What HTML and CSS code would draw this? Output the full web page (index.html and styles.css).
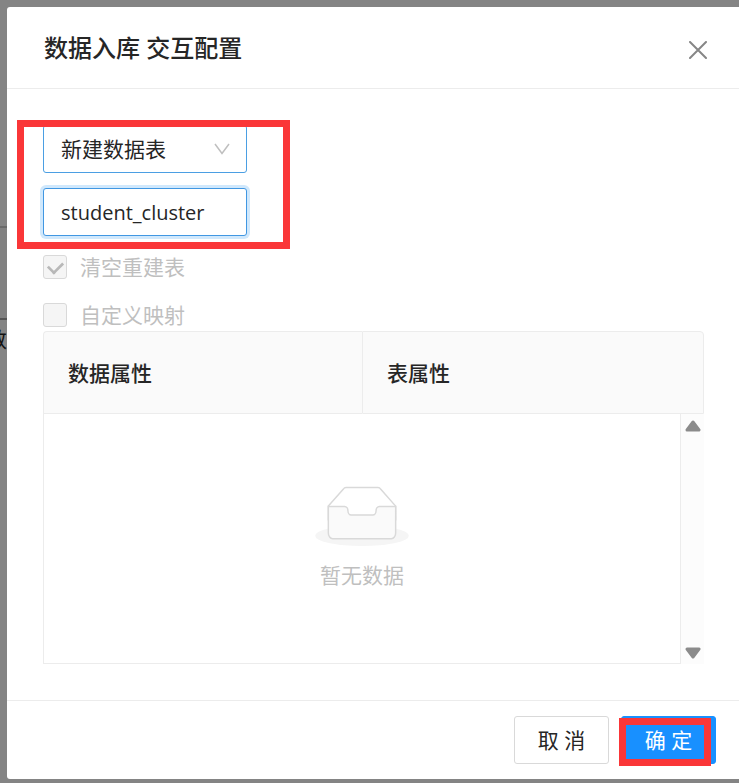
FILE: index.html
```html
<!DOCTYPE html>
<html lang="zh-CN">
<head>
<meta charset="utf-8">
<title>数据入库 交互配置</title>
<link rel="stylesheet" href="styles.css">
</head>
<body>
<div class="backdrop" aria-hidden="true">
  <div class="backdrop-panel"></div>
  <span class="backdrop-label">数</span>
</div>
<div class="modal" role="dialog" aria-labelledby="modal-title">
  <header class="modal-header">
    <h1 id="modal-title" class="modal-title">数据入库 交互配置</h1>
    <button class="close" type="button" aria-label="关闭">
      <svg width="18" height="18" viewBox="0 0 18 18"><path d="M1 1L17 17M17 1L1 17" fill="none" stroke="#868686" stroke-width="2" stroke-linecap="round"/></svg>
    </button>
  </header>
  <main class="modal-body">
    <div class="fields">
      <div class="select-wrap">
        <select class="control" aria-label="数据表"><option>新建数据表</option></select>
        <svg class="chevron" width="16" height="12" viewBox="0 0 16 12"><path d="M1 1L8 10.500L15 1" fill="none" stroke="#bfbfbf" stroke-width="1.500"/></svg>
      </div>
      <input class="control focused" type="text" value="student_cluster" aria-label="表名">
      <div class="mark mark-fields"></div>
    </div>
    <label class="check"><input type="checkbox" checked disabled><span>清空重建表</span></label>
    <label class="check"><input type="checkbox" disabled><span>自定义映射</span></label>
    <table class="table">
      <colgroup><col><col><col class="col-scroll"></colgroup>
      <thead>
        <tr><th>数据属性</th><th colspan="2">表属性</th></tr>
      </thead>
      <tbody>
        <tr>
          <td class="empty" colspan="2">
            <svg class="empty-icon" width="94" height="60" viewBox="0 0 64 41">
              <g transform="translate(0 1)" fill="none" fill-rule="evenodd">
                <ellipse fill="#f5f5f5" cx="32" cy="33" rx="32" ry="7"/>
                <g fill-rule="nonzero" stroke="#d9d9d9">
                  <path d="M55 12.760L44.854 1.258C44.367.474 43.656 0 42.907 0H21.093c-.749 0-1.460.474-1.947 1.257L9 12.761V22h46v-9.240z"/>
                  <path d="M41.613 15.931c0-1.605.994-2.930 2.227-2.931H55v18.137C55 33.260 53.680 35 52.050 35h-40.100C10.320 35 9 33.259 9 31.137V13h11.160c1.233 0 2.227 1.323 2.227 2.928v.022c0 1.605 1.005 2.901 2.237 2.901h14.752c1.232 0 2.237-1.308 2.237-2.913v-.007z" fill="#fafafa"/>
                </g>
              </g>
            </svg>
            <p class="empty-text">暂无数据</p>
          </td>
          <td class="scroll">
            <div class="scroll-track">
              <svg width="16" height="12" viewBox="0 0 16 12"><path d="M8 2L14 10H2Z" fill="#8b8b8b" stroke="#8b8b8b" stroke-width="3" stroke-linejoin="round"/></svg>
              <svg width="16" height="12" viewBox="0 0 16 12"><path d="M8 10L14 2H2Z" fill="#8b8b8b" stroke="#8b8b8b" stroke-width="3" stroke-linejoin="round"/></svg>
            </div>
          </td>
        </tr>
      </tbody>
    </table>
  </main>
  <footer class="modal-footer">
    <button class="btn" type="button">取 消</button>
    <div class="confirm">
      <button class="btn primary" type="button">确 定</button>
      <div class="mark mark-confirm"></div>
    </div>
  </footer>
</div>
</body>
</html>
```
FILE: styles.css
```css
* {
  box-sizing: border-box;
}

body {
  margin: 0;
  padding: 7px 0 4px 7px;
  background: #848484;
  color: #262626;
  font-family: "Noto Sans", "Noto Sans CJK SC", sans-serif;
  font-size: 21px;
  line-height: 32px;
}

.backdrop {
  position: absolute;
  top: 226px;
  left: 0;
  width: 7px;
  overflow: hidden;
}

.backdrop-panel {
  height: 94px;
  border-top: 2px solid #6a6a6a;
  border-bottom: 2px solid #555;
  background: #818181;
}

.backdrop-label {
  display: block;
  width: 21px;
  margin-left: -14px;
  padding-top: 3px;
  color: #111;
}

.modal {
  position: relative;
  background: #fff;
  border-radius: 3px 0 0 3px;
}

.modal-header {
  display: flex;
  align-items: center;
  justify-content: space-between;
  height: 82px;
  padding: 0 32px 0 37px;
  border-bottom: 1px solid #ececec;
}

.modal-title {
  margin: 0;
  font-size: 24px;
  font-weight: 500;
}

.close {
  display: flex;
  margin: 4px 0 0;
  padding: 0;
  border: 0;
  background: none;
}

.modal-body {
  padding: 36px 35px 36px 36px;
}

.fields {
  position: relative;
  display: flex;
  flex-direction: column;
  gap: 15px;
  width: 204px;
  margin-bottom: 17px;
}

.select-wrap {
  position: relative;
}

.control {
  display: block;
  width: 100%;
  height: 48px;
  padding: 0 17px;
  border: 1px solid #4b9fe3;
  border-radius: 3px;
  outline: 0;
  background: #fff;
  color: #262626;
  font: inherit;
  appearance: none;
}

.focused {
  border-color: #4197e2;
  box-shadow: 0 0 0 3px #d0e8fc;
}

input.control {
  font-family: "Open Sans", sans-serif;
  font-size: 20px;
}

.chevron {
  position: absolute;
  top: 18px;
  right: 17px;
  pointer-events: none;
}

.mark {
  position: absolute;
  border: 7px solid #fa3638;
  pointer-events: none;
}

.mark-fields {
  inset: -5px -43px -13px -26px;
}

.check {
  display: flex;
  align-items: center;
  gap: 13px;
  height: 28px;
  margin-bottom: 20px;
  color: #bfbfbf;
}

.check + .check {
  margin-bottom: 2px;
}

.check input {
  display: grid;
  place-items: center;
  width: 24px;
  height: 24px;
  margin: 0;
  border: 1px solid #d9d9d9;
  border-radius: 3px;
  background: #f5f5f5;
  appearance: none;
}

.check input:checked::after {
  content: "";
  width: 8px;
  height: 13px;
  margin-bottom: 3px;
  border: solid #b8b8b8;
  border-width: 0 3px 3px 0;
  transform: rotate(45deg) scale(0.9);
}

.table {
  width: 100%;
  border-spacing: 0;
  table-layout: fixed;
}

.col-scroll {
  width: 23px;
}

.table th {
  height: 83px;
  padding: 0 25px 0 24px;
  border: 1px solid #ececec;
  background: #fafafa;
  font-weight: 500;
  text-align: left;
}

.table th:first-child {
  border-right: 0;
  border-top-left-radius: 4px;
}

.table th:last-child {
  border-top-right-radius: 4px;
}

.table td {
  height: 250px;
  padding: 0;
}

.table .empty {
  border: solid #ececec;
  border-width: 0 1px 1px;
  color: #bfbfbf;
  text-align: center;
}

.empty-icon {
  display: block;
  margin: 0 auto 13px;
}

.empty-text {
  margin: 0;
}

.scroll-track {
  display: flex;
  flex-direction: column;
  align-items: center;
  justify-content: space-between;
  height: 250px;
  padding: 6px 0 5px;
  background: #fcfcfc;
}

.modal-footer {
  display: flex;
  justify-content: flex-end;
  gap: 12px;
  padding: 15px 23px 15px 0;
  border-top: 1px solid #ececec;
}

.btn {
  display: block;
  width: 95px;
  height: 48px;
  padding: 0;
  border: 1px solid #d9d9d9;
  border-radius: 3px;
  background: #fff;
  color: #262626;
  font: inherit;
}

.primary {
  border-color: #1890ff;
  background: #1890ff;
  color: #fff;
}

.confirm {
  position: relative;
}

.mark-confirm {
  inset: 2px 5px -2px -2px;
}
```
